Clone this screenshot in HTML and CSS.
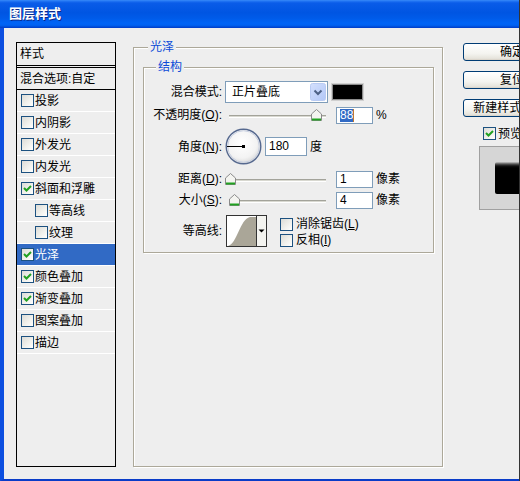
FILE: index.html
```html
<!DOCTYPE html>
<html>
<head>
<meta charset="utf-8">
<link rel="stylesheet" href="styles.css">
</head>
<body>
<div class="win">
  <div class="titlebar">图层样式</div>
  <div class="body">
    <div class="list">
      <div class="li hdr">样式</div>
      <div class="li blend">混合选项:自定</div>
      <div class="li"><span class="cb"></span>投影</div>
      <div class="li"><span class="cb"></span>内阴影</div>
      <div class="li"><span class="cb"></span>外发光</div>
      <div class="li"><span class="cb"></span>内发光</div>
      <div class="li"><span class="cb on"><svg width="11" height="11" viewBox="0 0 11 11"><path d="M2 5 L4.5 7.5 L9 3" fill="none" stroke="#21a121" stroke-width="2"/></svg></span>斜面和浮雕</div>
      <div class="li sub"><span class="cb"></span>等高线</div>
      <div class="li sub"><span class="cb"></span>纹理</div>
      <div class="li sel"><span class="cb on"><svg width="11" height="11" viewBox="0 0 11 11"><path d="M2 5 L4.5 7.5 L9 3" fill="none" stroke="#21a121" stroke-width="2"/></svg></span>光泽</div>
      <div class="li"><span class="cb on"><svg width="11" height="11" viewBox="0 0 11 11"><path d="M2 5 L4.5 7.5 L9 3" fill="none" stroke="#21a121" stroke-width="2"/></svg></span>颜色叠加</div>
      <div class="li"><span class="cb on"><svg width="11" height="11" viewBox="0 0 11 11"><path d="M2 5 L4.5 7.5 L9 3" fill="none" stroke="#21a121" stroke-width="2"/></svg></span>渐变叠加</div>
      <div class="li"><span class="cb"></span>图案叠加</div>
      <div class="li"><span class="cb"></span>描边</div>
    </div>

    <fieldset class="grp outer">
      <legend>光泽</legend>
      <fieldset class="grp inner">
        <legend>结构</legend>
        <div class="form">
          <div class="row r1">
            <span class="lbl">混合模式:</span>
            <div class="select">
              <span class="seltext">正片叠底</span>
              <svg class="selbtn" width="16" height="18" viewBox="0 0 16 18"><defs><linearGradient id="bg1" x1="0" y1="0" x2="1" y2="1"><stop offset="0" stop-color="#d4e0fd"/><stop offset="1" stop-color="#b2c7f7"/></linearGradient></defs><rect x="0.5" y="0.5" width="15" height="17" rx="2" fill="url(#bg1)" stroke="#b9cbf3"/><path d="M4.5 7.5 L8 11 L11.5 7.5" fill="none" stroke="#4d6185" stroke-width="2"/></svg>
            </div>
            <span class="swatch"></span>
          </div>
          <div class="row r2">
            <span class="lbl">不透明度(<u>O</u>):</span>
            <div class="slider"><svg class="thumb" style="left:86px" width="11" height="12" viewBox="0 0 11 12"><path d="M0.5 5 L5.5 0.5 L10.5 5 L10.5 11.5 L0.5 11.5 Z" fill="#f4f4f0" stroke="#8a8a8a"/><rect x="1" y="9.5" width="9" height="2" fill="#21a121"/></svg></div>
            <span class="inp"><span class="hl">88</span><span class="caret"></span></span>
            <span class="unit">%</span>
          </div>
          <div class="row r3">
            <span class="lbl">角度(<u>N</u>):</span>
            <svg class="dial" width="37" height="37" viewBox="0 0 37 37"><defs><radialGradient id="dg" cx="0.45" cy="0.4" r="0.62"><stop offset="0" stop-color="#ffffff"/><stop offset="0.7" stop-color="#f3f3f3"/><stop offset="1" stop-color="#d6d6d6"/></radialGradient></defs><circle cx="18.5" cy="18.5" r="17.3" fill="url(#dg)" stroke="#56698f" stroke-width="1.4"/><circle cx="18.5" cy="18.5" r="15.8" fill="none" stroke="#c9d1e2" stroke-width="1"/><line x1="2" y1="18.5" x2="18" y2="18.5" stroke="#000" stroke-width="1"/><rect x="17" y="17" width="3" height="3" fill="#000"/></svg>
            <span class="inp wide">180</span>
            <span class="unit">度</span>
          </div>
          <div class="row r4">
            <span class="lbl">距离(<u>D</u>):</span>
            <div class="slider"><svg class="thumb" style="left:0px" width="11" height="12" viewBox="0 0 11 12"><path d="M0.5 5 L5.5 0.5 L10.5 5 L10.5 11.5 L0.5 11.5 Z" fill="#f4f4f0" stroke="#8a8a8a"/><rect x="1" y="9.5" width="9" height="2" fill="#21a121"/></svg></div>
            <span class="inp">1</span>
            <span class="unit">像素</span>
          </div>
          <div class="row r5">
            <span class="lbl">大小(<u>S</u>):</span>
            <div class="slider"><svg class="thumb" style="left:4px" width="11" height="12" viewBox="0 0 11 12"><path d="M0.5 5 L5.5 0.5 L10.5 5 L10.5 11.5 L0.5 11.5 Z" fill="#f4f4f0" stroke="#8a8a8a"/><rect x="1" y="9.5" width="9" height="2" fill="#21a121"/></svg></div>
            <span class="inp">4</span>
            <span class="unit">像素</span>
          </div>
          <div class="row r6">
            <span class="lbl tall">等高线:</span>
            <svg class="contour" width="41" height="32" viewBox="0 0 41 32"><rect x="0.5" y="0.5" width="40" height="31" fill="#fff" stroke="#333"/><path d="M2 31 C 11 29, 14 4, 24 2 L30 2 L30 31 Z" fill="#aaa698"/><rect x="30.5" y="0.5" width="10" height="31" fill="#f4f4f0" stroke="#333"/><path d="M32.5 14.5 L38.5 14.5 L35.5 17.5 Z" fill="#000"/></svg>
            <div class="checks">
              <div class="chk"><span class="cb"></span><span>消除锯齿(<u>L</u>)</span></div>
              <div class="chk"><span class="cb"></span><span>反相(<u>I</u>)</span></div>
            </div>
          </div>
        </div>
      </fieldset>
    </fieldset>

    <div class="side">
      <div class="btn">确定</div>
      <div class="btn">复位</div>
      <div class="btn">新建样式(W)...</div>
      <div class="pvchk"><span class="cb on"><svg width="11" height="11" viewBox="0 0 11 11"><path d="M2 5 L4.5 7.5 L9 3" fill="none" stroke="#21a121" stroke-width="2"/></svg></span><span>预览(<u>V</u>)</span></div>
      <div class="pv"><div class="pvsq"></div></div>
    </div>
  </div>
</div>
</body>
</html>
```

FILE: styles.css
```css
html, body {
  margin: 0;
  padding: 0;
  background: #eeeeee;
}
body {
  font-family: "Liberation Sans", "Noto Sans CJK SC", sans-serif;
  font-size: 12px;
  line-height: 14px;
  color: #000;
}
.win {
  width: 520px;
  height: 481px;
  box-sizing: border-box;
  border-right: 1px solid #333;
  overflow: hidden;
  background: #eeeeee;
}
.titlebar {
  height: 28px;
  line-height: 28px;
  padding-left: 9px;
  color: #fff;
  font-weight: bold;
  font-size: 13px;
  text-shadow: 1px 1px 0 #0b2a8a;
  background: linear-gradient(to bottom, #3b8cf8 0, #2377f4 1px, #0a5ce8 3px, #0055e2 45%, #005be9 65%, #0064f6 82%, #0062f2 90%, #0050dc 95%, #003bc8 100%);
}
.body {
  height: 453px;
  box-sizing: border-box;
  border-left: 4px solid #0d4fe0;
  border-bottom: 2px solid #0a3cc8;
  padding: 12px 0 0 12px;
  display: flex;
  align-items: flex-start;
}

/* left style list */
.list {
  flex: none;
  width: 100px;
  height: 425px;
  margin-top: 2px;
  box-sizing: border-box;
  border: 1px solid #000;
}
.li {
  height: 22px;
  box-sizing: border-box;
  border-bottom: 1px solid #fff;
  display: flex;
  align-items: center;
  gap: 1px;
  padding-left: 4px;
  white-space: nowrap;
}
.li.hdr {
  height: 25px;
  border-bottom: 3px double #000;
  padding-left: 3px;
}
.li.blend {
  height: 22px;
  border-bottom: 1px solid #000;
  padding-left: 3px;
}
.li.sub { padding-left: 18px; }
.li.sel { background: #316ac5; color: #fff; }

.cb {
  flex: none;
  width: 13px;
  height: 13px;
  box-sizing: border-box;
  border: 1px solid #1c5180;
  background: linear-gradient(135deg, #dcdcd7 0%, #f2f2ee 60%, #ffffff 100%);
  display: inline-flex;
  align-items: center;
  justify-content: center;
}
.cb svg { display: block; }

/* group boxes */
.grp {
  margin: 0;
  padding: 0;
  min-width: 0;
  box-sizing: border-box;
  border: 1px solid #aca899;
  box-shadow: 1px 1px 0 #fff, inset 1px 1px 0 #fff;
}
.grp > legend {
  padding: 0 2px;
  font-size: 12px;
  line-height: 14px;
  color: #0b4bd8;
  background: #eeeeee;
}
.outer {
  flex: none;
  width: 310px;
  height: 427px;
  margin-left: 17px;
}
.outer > legend { margin-left: 14px; }
.inner {
  width: 291px;
  margin: 6px 0 0 9px;
}
.inner > legend { margin-left: 12px; }
.form { padding: 7px 0 5px 0; }

.row {
  display: flex;
  align-items: center;
  white-space: nowrap;
}
.lbl {
  flex: none;
  width: 78px;
  margin-right: 3px;
  text-align: right;
}
.lbl.tall { line-height: 32px; }
.r1 { height: 22px; }
.r2 { height: 18px; margin-top: 3px; }
.r3 { height: 37px; margin-top: 4px; }
.r4 { height: 18px; margin-top: 5px; }
.r5 { height: 18px; margin-top: 3px; }
.r6 { height: 32px; margin-top: 6px; align-items: flex-start; }

.select {
  flex: none;
  width: 103px;
  height: 22px;
  box-sizing: border-box;
  border: 1px solid #7f9db9;
  background: #fff;
  display: flex;
  align-items: center;
}
.seltext { flex: 1; padding-left: 6px; }
.selbtn { flex: none; margin-right: 1px; display: block; }
.swatch {
  flex: none;
  width: 31px;
  height: 16px;
  margin-left: 4px;
  box-sizing: border-box;
  background: #000;
  border: 1px solid #8c8c8c;
  box-shadow: 0 0 0 1px #d0d0d0;
}

.slider {
  flex: none;
  position: relative;
  width: 105px;
  height: 18px;
}
.slider::before {
  content: "";
  position: absolute;
  left: 4px;
  right: 4px;
  top: 9px;
  height: 1px;
  border-top: 1px solid #a3a39a;
  border-bottom: 1px solid #fff;
  background: #d8d8d0;
}
.thumb {
  position: absolute;
  top: 3px;
  display: block;
}

.inp {
  flex: none;
  width: 37px;
  height: 17px;
  margin-left: 6px;
  box-sizing: border-box;
  border: 1px solid #7f9db9;
  background: #fff;
  padding-left: 3px;
  font-family: "Liberation Sans", sans-serif;
  font-size: 12px;
  line-height: 15px;
  display: flex;
  align-items: center;
}
.inp .hl { background: #316ac5; color: #fff; line-height: 13px; }
.inp .caret { width: 1px; height: 13px; background: #c07a30; }
.inp.wide { width: 42px; height: 19px; margin-left: 3px; }
.unit { margin-left: 3px; }

.dial { flex: none; display: block; }
.contour { flex: none; display: block; margin-left: 1px; }
.checks {
  margin-left: 13px;
  margin-top: 1px;
  display: flex;
  flex-direction: column;
}
.chk {
  height: 16px;
  display: flex;
  align-items: center;
  gap: 3px;
}

/* right column */
.side {
  flex: none;
  width: 98px;
  margin-left: 20px;
  margin-top: 3px;
  display: flex;
  flex-direction: column;
}
.btn {
  width: 98px;
  height: 18px;
  box-sizing: border-box;
  border: 1px solid #003c74;
  border-radius: 3px;
  background: linear-gradient(to bottom, #ffffff 0%, #f4f4f0 60%, #e6e4dc 90%, #d6d0c5 100%);
  text-align: center;
  line-height: 16px;
  white-space: nowrap;
  margin-bottom: 10px;
}
.pvchk {
  height: 13px;
  padding-left: 20px;
  display: flex;
  align-items: center;
  gap: 2px;
  white-space: nowrap;
}
.pv {
  width: 64px;
  height: 64px;
  margin: 6px 0 0 16px;
  box-sizing: border-box;
  border: 1px solid #a0a0a0;
  background: #d6d6d6;
  display: flex;
  align-items: center;
  justify-content: center;
}
.pvsq {
  width: 32px;
  height: 32px;
  border-radius: 2px;
  background: linear-gradient(to bottom, #c8c8c8 0, #555 2px, #111 4px, #000 6px);
}
```
